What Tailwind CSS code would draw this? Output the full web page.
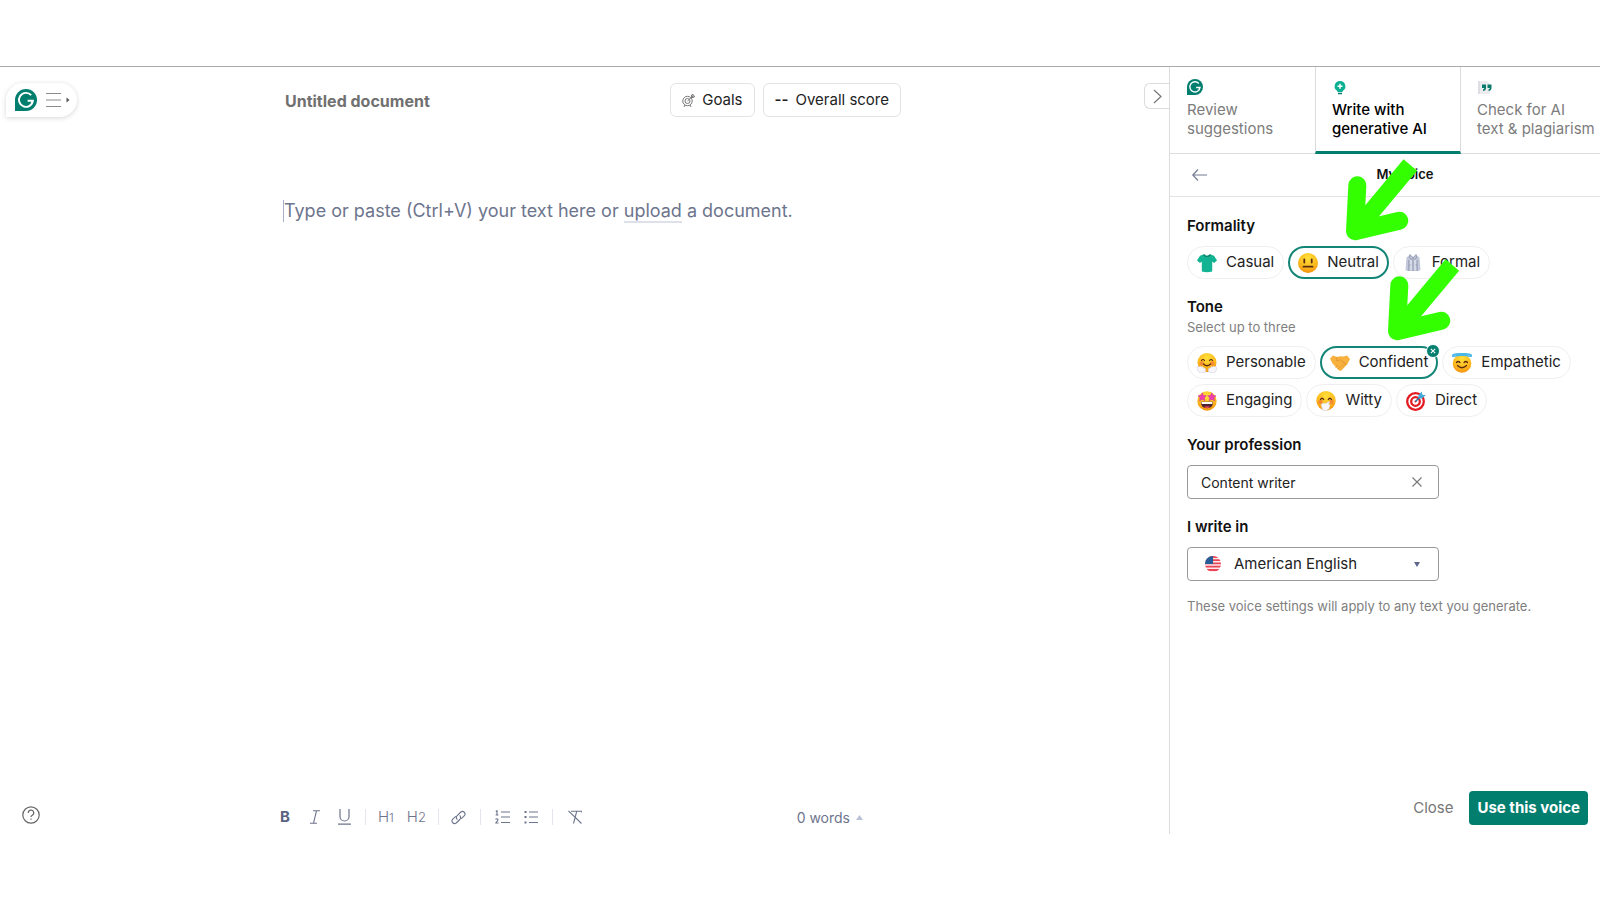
<!DOCTYPE html>
<html lang="en">
<head>
<meta charset="utf-8">
<title>Untitled document</title>
<script src="https://cdn.jsdelivr.net/npm/@tailwindcss/browser@4"></script>
</head>
<body class="bg-white font-['Inter',sans-serif] text-[#222]">
<svg class="absolute size-0" aria-hidden="true">
  <defs>
    <radialGradient id="face" cx="50%" cy="25%" r="80%"><stop offset="0" stop-color="#ffe03a"/><stop offset=".6" stop-color="#fdb91c"/><stop offset="1" stop-color="#f38a0c"/></radialGradient>
    <symbol id="logo" viewBox="0 0 22 22"><path d="M0 22V11a11 11 0 1 1 11 11z" fill="#027e6f"/><path d="M16.2 6.2A7 7 0 1 0 17.900 11.700H12.600M17.900 11.200L16 16" fill="none" stroke="#fff" stroke-width="1.900"/></symbol>
    <symbol id="pointer" viewBox="555 28 219 246"><path d="M751 46L585 245" stroke="#3f0" stroke-width="53" fill="none"/><path d="M592 107L585 245L718 213" stroke="#3f0" stroke-width="54" fill="none" stroke-linecap="round" stroke-linejoin="round"/></symbol>
  </defs>
</svg>
<div class="flex min-h-screen flex-col py-[66px]">
  <div class="flex flex-1 border-t border-[#a9a9a5]">

    <main class="relative flex min-w-0 flex-1 flex-col">
      <header class="flex items-center pt-4">
        <div class="w-[285px] shrink-0 pl-[6px]">
          <div class="flex h-[34px] w-[71px] items-center gap-[9px] rounded-full rounded-bl-none bg-white pl-[9px] shadow-[0_1px_5px_rgba(0,0,0,0.16)]">
            <svg class="size-[22px]"><use href="#logo"/></svg>
            <button aria-label="Menu"><svg class="h-4 w-6" viewBox="0 0 24 16"><path d="M0 1.500h15M0 8h15M0 14.500h15" stroke="#8c8c8c" stroke-width="1.200"/><path d="M20.500 5.500l3 2.500-3 2.500z" fill="#555"/></svg></button>
          </div>
        </div>
        <div class="flex w-[616px] items-center gap-2">
          <h1 class="mr-auto pt-[2px] text-base font-bold text-[#707070]">Untitled document</h1>
          <button class="flex h-[34px] items-center gap-[7px] rounded-md border border-[#e3e3e3] px-[11px] text-[15px]">
            <svg class="size-[13px]" viewBox="0 0 13 13" fill="none" stroke="#777" stroke-width="1"><circle cx="5.500" cy="7" r="4.700"/><circle cx="5.500" cy="7" r="2.500"/><path d="M5.500 7L11 2M9.500 3.300V1l1.500-.8V2l1.800.2-1 1.300H9.500M3 11l-1 2M8 11l1 2"/></svg>
            Goals
          </button>
          <button class="flex h-[34px] items-center gap-[7px] rounded-md border border-[#e3e3e3] px-[11px] pt-px text-[15px]"><span class="font-semibold">--</span> Overall score</button>
        </div>
      </header>
      <button aria-label="Collapse panel" class="absolute top-4 right-0 flex h-[26px] w-[25px] items-center justify-center rounded-l-md border border-r-0 border-[#dcdcdc]"><svg class="h-[15px] w-[9px]" viewBox="0 0 9 15"><path d="M1 1l7 6.500-7 6.500" fill="none" stroke="#777" stroke-width="1.200"/></svg></button>

      <div class="mt-[83px] flex-1 pl-[283px]">
        <p class="border-l border-[#a9b0ca] text-lg leading-[22px] text-[#6d758d]">Type or paste (Ctrl+V) your text here or <a href="#" class="border-b-2 border-[#dfe1ea]">upload</a> a document.</p>
      </div>

      <footer class="flex h-[34px] items-center text-[#6d758d]">
        <div class="w-[280px] shrink-0 pl-[22px]"><button aria-label="Help" class="block pb-1"><svg class="size-[18px]" viewBox="0 0 18 18" fill="none" stroke="#666" stroke-width="1.200"><circle cx="9" cy="9" r="8.200"/><path d="M6.300 7a2.700 2.700 0 1 1 4 2.200C9.400 9.700 9 10 9 11"/><path d="M9 12.500v1.300"/></svg></button></div>
        <div class="flex w-[583px] items-center">
          <button class="w-[14px] text-left text-[15px] font-bold text-[#5a6280]">B</button>
          <button aria-label="Italic" class="ml-4"><svg class="h-[14px] w-[10px]" viewBox="0 0 10 14" fill="none" stroke="currentColor" stroke-width="1.100"><path d="M3 .8h7M0 13.200h7M6.500 .8l-3 12.400"/></svg></button>
          <button aria-label="Underline" class="ml-[18px]"><svg class="h-4 w-[13px]" viewBox="0 0 13 16" fill="none" stroke="currentColor" stroke-width="1.200"><path d="M2 0v7.500a4.500 4.500 0 0 0 9 0V0M0 15.200h13"/></svg></button>
          <span class="ml-[14px] h-4 w-px bg-[#e3e5ef]"></span>
          <button class="ml-3 text-[15px] font-light">H<span class="text-xs">1</span></button>
          <button class="ml-[13px] text-[15px] font-light">H<span class="text-[13px]">2</span></button>
          <span class="ml-3 h-4 w-px bg-[#e3e5ef]"></span>
          <button aria-label="Link" class="ml-3"><svg class="size-[15px]" viewBox="0 0 15 15" fill="none" stroke="currentColor" stroke-width="1.100" stroke-linecap="round"><path d="M6 9.300a3 3 0 0 1 .2-3.700L9.800 2a2.600 2.600 0 0 1 3.600 3.700L10.600 8.300M9 5.800a3 3 0 0 1-.2 3.700L5.200 13a2.600 2.600 0 0 1-3.600-3.700L4.400 6.700"/></svg></button>
          <span class="ml-[14px] h-4 w-px bg-[#e3e5ef]"></span>
          <button aria-label="Numbered list" class="ml-[14px]"><svg class="h-[14px] w-[15px]" viewBox="0 0 15 14" fill="none" stroke="currentColor" stroke-width="1.100"><path d="M6 2h9M6 7h9M6 12.500h9"/><path d="M.8 1.500L2 .7V5M.6 5h2.800M.6 9.500C1 8.500 3 8.500 3 9.800 3 11 1 12 .8 13h2.800"/></svg></button>
          <button aria-label="Bulleted list" class="ml-[14px]"><svg class="h-[14px] w-[14px]" viewBox="0 0 14 14" fill="none" stroke="currentColor" stroke-width="1.100"><path d="M5 2h9M5 7h9M5 12.500h9"/><path d="M.5 2h2M.5 7h2M.5 12.500h2" stroke-width="1.800"/></svg></button>
          <span class="ml-[14px] h-4 w-px bg-[#e3e5ef]"></span>
          <button aria-label="Clear formatting" class="ml-[15px]"><svg class="h-[14px] w-[14px]" viewBox="0 0 14 14" fill="none" stroke="currentColor" stroke-width="1.100"><path d="M3 1.200h11v1.500M8.800 1.200L5.500 13.500M.5.800L13.500 13.500"/></svg></button>
          <button class="ml-auto flex items-center gap-[6px] pt-px text-sm">0 words <svg class="h-[5px] w-[7px]" viewBox="0 0 7 5"><path d="M0 5L3.500 0 7 5z" fill="#bcc2d6"/></svg></button>
        </div>
      </footer>
    </main>

    <aside class="relative flex w-[431px] shrink-0 flex-col border-l border-[#dcdcdc]">
      <nav class="grid h-[87px] grid-cols-[145px_146px_1fr] border-b border-[#dedede] text-[15px] leading-[19px] whitespace-nowrap text-[#7c7c7c]">
        <button class="flex flex-col items-start pt-3 pl-[17px] text-left"><svg class="mb-[5px] size-4"><use href="#logo"/></svg>Review<br>suggestions</button>
        <button class="-mb-px flex flex-col items-start border-x border-b-3 border-x-[#dcdcdc] border-b-[#027e6f] pt-3 pl-4 text-left font-medium text-black">
          <svg class="mb-[5px] h-4 w-4" viewBox="0 0 16 16"><path d="M8 2a5.300 5.300 0 0 1 3 9.700L10.300 13H5.700L5 11.700A5.300 5.300 0 0 1 8 2z" fill="#0bb092"/><path d="M6 14.500h4" stroke="#087c6c" stroke-width="1.500"/><path d="M8 4.800v5M5.500 7.300h5" stroke="#fff" stroke-width="1.500"/></svg>Write with<br>generative AI</button>
        <button class="flex flex-col items-start pt-3 pl-4 text-left">
          <svg class="mb-[5px] h-4 w-4" viewBox="0 0 16 16"><path d="M1 2h9l3 3v10H1z" fill="#ececee"/><path d="M2 2v13" stroke="#cfd1d6"/><path d="M5 5.500h4v3.500q0 2.500-3 3v-1.500q1.300-.4 1.300-1.500H5zM10.500 5.500h4v3.500q0 2.500-3 3v-1.500q1.300-.4 1.300-1.500h-2.300z" fill="#087c6c"/></svg>Check for AI<br>text &amp; plagiarism</button>
      </nav>
      <div class="relative flex h-[43px] items-center justify-center border-b border-[#e3e3e3]">
        <button aria-label="Back" class="absolute left-[22px]"><svg class="block h-3 w-[15px]" viewBox="0 0 15 12" fill="none" stroke="#737b94" stroke-width="1.200"><path d="M15 6H1M6 .5L.8 6 6 11.500"/></svg></button>
        <h2 class="pl-10 text-[13px] font-semibold text-[#111]">My voice</h2>
      </div>

      <div class="flex-1 pt-[19px] pl-[17px]">
        <h3 class="text-[15px] leading-5 font-semibold text-[#111]">Formality</h3>
        <div class="mt-[10px] flex gap-1 text-[15px]">
          <button class="flex h-[33px] items-center gap-[9px] rounded-full border border-[#efefef] px-[9px]">
            <svg class="size-5" viewBox="0 0 20 20"><path d="M6.500 1.500q3.500 2.500 7 0L17 2.800 20 7.500l-3 2.500-1.800-1.500V18.500q-5 1.500-10.400 0V8.500L3 10 0 7.500l3-4.700z" fill="#12b392"/><path d="M6.500 1.500q3.500 4 7 0" fill="none" stroke="#078268" stroke-width="1.200"/></svg>Casual</button>
          <button aria-pressed="true" class="flex h-[33px] items-center gap-[9px] rounded-full border-2 border-[#138577] px-2">
            <svg class="size-5" viewBox="0 0 20 20"><circle cx="10" cy="10" r="10" fill="url(#face)"/><path d="M6.300 6.500v3M13.700 6.500v3M5.500 13.700h9" stroke="#5b2b12" stroke-width="1.800" stroke-linecap="round"/></svg>Neutral</button>
          <button class="flex h-[33px] items-center gap-[9px] rounded-full border border-[#efefef] px-[9px]">
            <svg class="size-5" viewBox="0 0 20 20"><path d="M6.500 2L10 4l3.500-2 3 2.500L17.500 17l-2 1H4.500l-2-1 1-12.500z" fill="#c3c8da"/><path d="M7 1.500L10 5l3-3.500M10 5v13M5.800 7v11M14.200 7v11M7 1.500L6.500 5 9 6.500M13 1.500l.5 3.500L11 6.500M6 12h2.500M11.500 12H14" fill="none" stroke="#8f96ae" stroke-width=".9"/><path d="M8 7v10M12 7v10" stroke="#e9ecf5"/></svg>Formal</button>
        </div>
        <h3 class="mt-[18px] text-[15px] leading-5 font-semibold text-[#111]">Tone</h3>
        <p class="mt-px text-[13px] leading-[18px] text-[#808080]">Select up to three</p>
        <div class="mt-[10px] flex gap-1 text-[15px]">
          <button class="flex h-[33px] items-center gap-[9px] rounded-full border border-[#efefef] px-[9px]">
            <svg class="size-5" viewBox="0 0 20 20"><circle cx="10" cy="9.500" r="9.500" fill="url(#face)"/><circle cx="4.800" cy="10.500" r="2.200" fill="#f58a35"/><circle cx="15.200" cy="10.500" r="2.200" fill="#f58a35"/><path d="M4.500 7.500q1.500-2 3 0M12.500 7.500q1.500-2 3 0M6.500 11q3.500 3.500 7 0" fill="none" stroke="#5b2b12" stroke-width="1.200" stroke-linecap="round"/><path d="M.5 15q0-2.500 1.500-1.500l.5.500q1-2 2 0 1-1 1.500.5 3 .5 2.800 3-.3 2.500-4 2.500Q.5 20 .5 15zM19.500 15q0-2.500-1.500-1.500l-.5.500q-1-2-2 0-1-1-1.500.5-3 .5-2.800 3 .3 2.500 4 2.500 4.300 0 4.300-5z" fill="#f6f5fa" stroke="#c9c6d2" stroke-width=".5"/></svg>Personable</button>
          <button aria-pressed="true" class="relative flex h-[33px] items-center gap-[9px] rounded-full border-2 border-[#138577] px-2">
            <svg class="size-5" viewBox="0 0 20 20"><path d="M0 5.500L3 2.500 7 4l3-.8 3.500.3L17 2.500l3 3.500-2.500 5-6 6.500q-1.500.8-3-.5L2.500 10.500z" fill="#f8b13e"/><path d="M7 4L6 7.500q2 1.500 4-1l6.500 5M8 12l-2.500 2.500M10.500 13.500L8 16M13 9.500l2.500 2.500M11.500 11.500l2 2.500" fill="none" stroke="#e0922d" stroke-width=".8"/></svg>Confident
            <svg class="absolute -top-1 -right-1 size-[14px]" viewBox="0 0 14 14"><circle cx="7" cy="7" r="6.500" fill="#027e6f" stroke="#fff"/><path d="M4.800 4.800l4.400 4.400M9.200 4.800L4.800 9.200" stroke="#fff" stroke-width="1.100"/></svg></button>
          <button class="flex h-[33px] items-center gap-[9px] rounded-full border border-[#efefef] px-[9px]">
            <svg class="size-5" viewBox="0 0 20 20"><circle cx="10" cy="10.500" r="9.300" fill="url(#face)"/><path d="M1 3.500C-1 1.200 5 .7 10 .7s11 .5 9 2.800M1 3.500q9-2.500 18 0" fill="none" stroke="#4bb8ea" stroke-width="1.600"/><path d="M4.500 9.500q1.700-2 3.400 0M12.100 9.500q1.700-2 3.400 0M5.500 12.500q4.500 4.500 9 0" fill="none" stroke="#5b2b12" stroke-width="1.300" stroke-linecap="round"/></svg>Empathetic</button>
        </div>
        <div class="mt-[5px] flex gap-1 text-[15px]">
          <button class="flex h-[33px] items-center gap-[9px] rounded-full border border-[#efefef] px-[9px]">
            <svg class="size-5" viewBox="0 0 20 20"><circle cx="10" cy="10" r="9.700" fill="url(#face)"/><path d="M5.200 1.800l1.200 2.700 3 .3-2.200 2 .7 3-2.700-1.500L2.500 9.800l.6-3L1 4.800l3-.3zM14.800 1.800L16 4.500l3 .3-2.100 2 .6 3-2.700-1.500-2.700 1.500.7-3-2.200-2 3-.3z" fill="#ef3fb0" stroke="#c92ba0" stroke-width=".5"/><path d="M4 10.800h12q0 6.500-6 6.500t-6-6.500z" fill="#4f2330"/><path d="M4.500 11h11l-.3 2H4.800z" fill="#fff"/><path d="M6.800 16q3.200-1.500 6.400 0-3 2-6.400 0z" fill="#ef4459"/></svg>Engaging</button>
          <button class="flex h-[33px] items-center gap-[9px] rounded-full border border-[#efefef] px-[9px]">
            <svg class="size-5" viewBox="0 0 20 20"><circle cx="10" cy="9.700" r="9.700" fill="url(#face)"/><circle cx="4.500" cy="11" r="2.200" fill="#f58a35"/><circle cx="15.500" cy="11" r="2.200" fill="#f58a35"/><path d="M4.500 8.500q1.500-2.500 3.200 0M12.300 8.500q1.500-2.500 3.200 0" fill="none" stroke="#5b2b12" stroke-width="1.300" stroke-linecap="round"/><path d="M5 13.500l2-1.500 2.500.5L13 10.500l.8.700L12.500 13l1.500 1-1 4-3.500 2-3-1.500z" fill="#f8f7fb" stroke="#c9c6d2" stroke-width=".5"/></svg>Witty</button>
          <button class="flex h-[33px] items-center gap-[9px] rounded-full border border-[#efefef] px-[9px]">
            <svg class="size-5" viewBox="0 0 20 20"><circle cx="9.500" cy="10.500" r="8.300" fill="#fff" stroke="#e31b23" stroke-width="2.300"/><circle cx="9.500" cy="10.500" r="4.300" fill="#fff" stroke="#e31b23" stroke-width="2.300"/><circle cx="9.500" cy="10.500" r="1" fill="#e31b23"/><path d="M9.500 10.500L16 4" stroke="#286f9b" stroke-width="1.500"/><path d="M12.500 7.500V4L16 .5V3l1 1h2.800L16 7.500z" fill="#43a9dc"/></svg>Direct</button>
        </div>

        <label for="job" class="mt-[18px] block text-[15px] leading-5 font-semibold text-[#111]">Your profession</label>
        <div class="relative mt-[10px] w-[252px]">
          <input id="job" type="text" value="Content writer" class="block h-[34px] w-full rounded border border-[#999] px-[13px] text-sm">
          <button aria-label="Clear profession" class="absolute top-3 right-[17px]"><svg class="block size-[10px]" viewBox="0 0 10 10"><path d="M.5.500l9 9M9.500.500l-9 9" stroke="#777" stroke-width="1.100"/></svg></button>
        </div>
        <label for="lang" class="mt-[18px] block text-[15px] leading-5 font-semibold text-[#111]">I write in</label>
        <div class="relative mt-[10px] w-[252px]">
          <select id="lang" class="block h-[34px] w-full appearance-none rounded border border-[#999] bg-white pl-[46px] text-[15px]"><option>American English</option></select>
          <svg class="pointer-events-none absolute top-[9px] left-[18px] size-4" viewBox="0 0 16 16"><clipPath id="round"><circle cx="8" cy="8" r="8"/></clipPath><g clip-path="url(#round)"><path fill="#fbe9ec" d="M0 0h16v16H0z"/><path d="M0 1h16M0 4.200h16M0 7.400h16M0 10.600h16M0 14h16" stroke="#ea4656" stroke-width="1.800"/><path fill="#265d96" d="M0 0h8v8H0z"/></g></svg>
          <svg class="pointer-events-none absolute top-[15px] right-[19px] h-[5px] w-[6px]" viewBox="0 0 6 5"><path d="M0 0h6L3 5z" fill="#5d668c"/></svg>
        </div>
        <p class="mt-4 text-[13px] leading-[18px] text-[#808080]">These voice settings will apply to any text you generate.</p>
      </div>
      <div class="flex items-center justify-end gap-4 pr-3 pb-[9px] text-[15px]">
        <button class="text-[#777]">Close</button>
        <button class="h-[34px] rounded bg-[#027e6f] px-2 font-bold text-white">Use this voice</button>
      </div>

      <svg class="pointer-events-none absolute top-[92px] left-[175px] h-[82px] w-[73px]"><use href="#pointer"/></svg>
      <svg class="pointer-events-none absolute top-[192px] left-[217px] h-[82px] w-[73px]"><use href="#pointer"/></svg>
    </aside>
  </div>
</div>
</body>
</html>
